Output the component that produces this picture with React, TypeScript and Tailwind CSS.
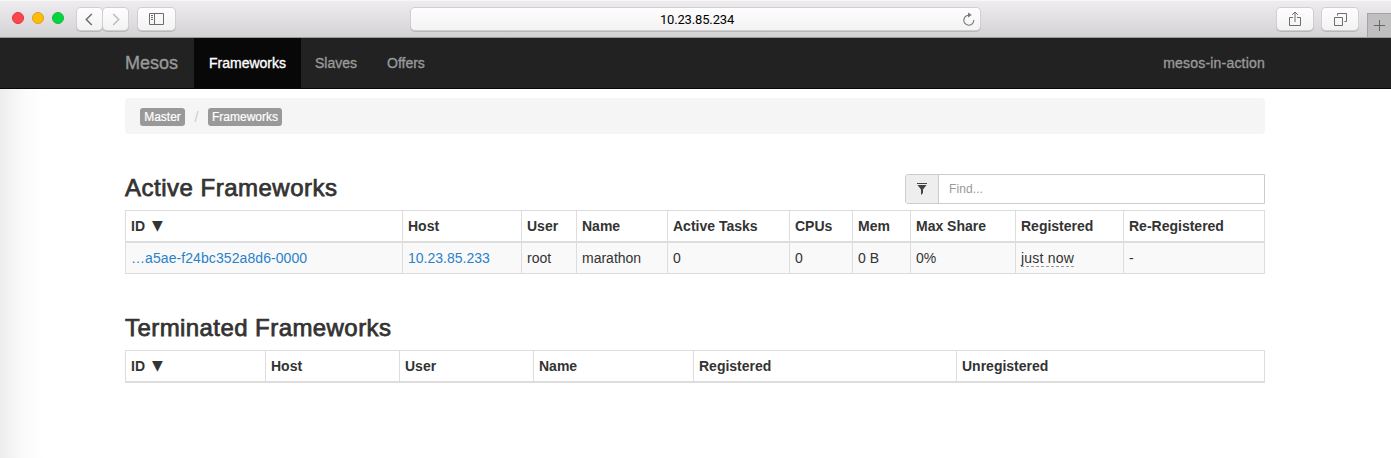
import React from "react";

type Column = { label: string; width: string };

const activeColumns: Column[] = [
  { label: "ID ▼", width: "w-[277px]" },
  { label: "Host", width: "w-[119px]" },
  { label: "User", width: "w-[55px]" },
  { label: "Name", width: "w-[91px]" },
  { label: "Active Tasks", width: "w-[122px]" },
  { label: "CPUs", width: "w-[63px]" },
  { label: "Mem", width: "w-[58px]" },
  { label: "Max Share", width: "w-[105px]" },
  { label: "Registered", width: "w-[108px]" },
  { label: "Re-Registered", width: "w-[142px]" },
];

const terminatedColumns: Column[] = [
  { label: "ID ▼", width: "w-[140px]" },
  { label: "Host", width: "w-[134px]" },
  { label: "User", width: "w-[134px]" },
  { label: "Name", width: "w-[160px]" },
  { label: "Registered", width: "w-[263px]" },
  { label: "Unregistered", width: "w-[309px]" },
];

const frameworks: React.ReactNode[][] = [
  [
    <a className="tracking-[0.08px] text-[#2a81cb]">…a5ae-f24bc352a8d6-0000</a>,
    <a className="text-[#2a81cb]">10.23.85.233</a>,
    "root",
    "marathon",
    "0",
    "0",
    "0 B",
    "0%",
    <span className="block h-[18px] w-[53px] border-b border-dashed border-[#999] leading-[18px] tracking-[0.2px]">
      just now
    </span>,
    "-",
  ],
];

function DataTable({ columns, rows = [] }: { columns: Column[]; rows?: React.ReactNode[][] }) {
  return (
    <table className="w-[1140px] table-fixed border-separate border-spacing-0 text-left text-sm leading-5">
      <thead>
        <tr>
          {columns.map((c) => (
            <th
              key={c.label}
              className={`${c.width} h-[33px] border-t border-b-2 border-l border-[#ddd] p-0 pl-[5px] font-bold whitespace-nowrap last:border-r`}
            >
              {c.label.endsWith("▼") ? (
                <span className="flex items-center gap-[7px]">
                  ID
                  <span className="w-[12px] pb-[2px] font-['DejaVu_Sans',sans-serif] text-[14px] leading-[18px] font-normal">
                    ▼
                  </span>
                </span>
              ) : (
                c.label
              )}
            </th>
          ))}
        </tr>
      </thead>
      <tbody>
        {rows.map((row, i) => (
          <tr key={i} className="bg-[#f9f9f9]">
            {row.map((cell, j) => (
              <td key={j} className="h-[31px] border-b border-l border-[#ddd] p-0 pl-[5px] whitespace-nowrap last:border-r">
                {cell}
              </td>
            ))}
          </tr>
        ))}
      </tbody>
    </table>
  );
}

const toolButton =
  "flex h-[22px] items-center justify-center rounded-[4px] bg-linear-to-b from-[#fefefe] to-[#f3f3f3] shadow-[0_0_0_1px_#d0ced0,0_1px_0_1px_#b9b7b9]";

function Toolbar() {
  return (
    <header className="flex h-[38px] items-start border-b border-[#9a999b] bg-linear-to-b from-[#efedef] to-[#d4d2d4] shadow-[inset_0_1px_0_#f8f7f8]">
      <div className="flex gap-2 pt-3 pl-3">
        <span className="size-3 rounded-full border border-[#e1343a] bg-[#fc4649]" />
        <span className="size-3 rounded-full border border-[#dfa01b] bg-[#fdbc05]" />
        <span className="size-3 rounded-full border border-[#12bb3a] bg-[#06d43f]" />
      </div>
      <div className="ml-[13px] flex gap-px pt-2">
        <span className={`${toolButton} w-[25px]`}>
          <svg className="-ml-px" width="8" height="13" viewBox="0 0 8 13" fill="none" stroke="#6d6d6d" strokeWidth="1.5">
            <path d="M6.8 1 1.3 6.5 6.8 12" />
          </svg>
        </span>
        <span className={`${toolButton} w-[25px]`}>
          <svg className="ml-px" width="8" height="13" viewBox="0 0 8 13" fill="none" stroke="#bcbcbc" strokeWidth="1.5">
            <path d="M1.2 1 6.7 6.5 1.2 12" />
          </svg>
        </span>
      </div>
      <div className="ml-[10px] pt-2">
        <span className={`${toolButton} w-[37px]`}>
          <svg width="15" height="12" viewBox="0 0 15 12" fill="none" stroke="#6d6d6d">
            <path d="M.5.5h14v11H.5zM5.5.5v11M2 2.5h2M2 4.5h2M2 6.5h2" />
          </svg>
        </span>
      </div>
      <div className="ml-[236px] pt-2">
        <div className={`${toolButton} w-[569px]`}>
          <span className="w-[21px]" />
          <span className="flex-1 pt-px text-center font-['Roboto',sans-serif] text-[13px] leading-5 tracking-[-0.15px] text-black">
            10.23.85.234
          </span>
          <svg className="mr-[4px]" width="14" height="15" viewBox="0 0 14 15" fill="none" stroke="#777" strokeWidth="1.1">
            <path d="M6.5 3.2A5 5 0 1 0 11.8 8" />
            <path d="M6 .5v5l3.8-2.5z" fill="#777" stroke="none" />
          </svg>
        </div>
      </div>
      <div className="ml-[297px] flex gap-[9px] pt-2">
        <span className={`${toolButton} w-[36px]`}>
          <svg width="12" height="16" viewBox="0 0 12 16" fill="none" stroke="#6d6d6d">
            <path d="M4 6.5H.5v8h11v-8H8M6 11V1M3.2 3.8 6 1l2.8 2.8" />
          </svg>
        </span>
        <span className={`${toolButton} w-[36px]`}>
          <svg width="13" height="13" viewBox="0 0 13 13" fill="none" stroke="#6d6d6d">
            <path d="M.5 4.5h8v8h-8zM3.5 2.5v-2h9v8h-2" />
          </svg>
        </span>
      </div>
      <span className="mt-[13px] ml-auto flex h-6 w-6 items-center justify-center border-t border-l border-[#a5a4a5] bg-[#c0bfc0]">
        <svg width="11" height="11" viewBox="0 0 11 11" stroke="#666">
          <path d="M5.5 0v11M0 5.5h11" />
        </svg>
      </span>
    </header>
  );
}

function Navbar() {
  return (
    <nav className="h-[51px] border-b border-[#080808] bg-[#222]">
      <div className="ml-[125px] flex h-[50px] w-[1140px] items-center text-sm leading-5 text-[#999] [-webkit-text-stroke:0.35px]">
        <span className="w-[69px] text-[18px]">Mesos</span>
        <span className="flex h-[50px] w-[107px] items-center justify-center bg-[#080808] text-white">Frameworks</span>
        <span className="w-[71px] pl-[14px]">Slaves</span>
        <span className="pl-[15px]">Offers</span>
        <span className="ml-auto tracking-[0.2px]">mesos-in-action</span>
      </div>
    </nav>
  );
}

export default function App() {
  return (
    <div className="h-[458px] w-[1391px] overflow-hidden bg-white font-['Liberation_Sans',Arial,sans-serif] text-[#333]">
      <Toolbar />
      <Navbar />
      <main className="h-[369px] bg-linear-to-r from-[#ededed] via-[#fbfbfb] via-[24px] to-white to-[45px] pt-[9px] pl-[125px]">
        <div className="flex h-9 w-[1140px] items-center rounded bg-[#f5f5f5] pt-[2px] pl-[15px] text-xs leading-[18px] text-white">
          <span className="w-[45px] rounded-[3px] bg-[#999] text-center [-webkit-text-stroke:0.2px]">Master</span>
          <span className="w-[23px] text-center text-sm leading-[18px] text-[#ccc]">/</span>
          <span className="w-[74px] rounded-[3px] bg-[#999] text-center [-webkit-text-stroke:0.2px]">Frameworks</span>
        </div>
        <div className="flex h-[76px] w-[1140px] items-end justify-between">
          <h2 className="pb-[6px] text-2xl leading-8 font-normal tracking-[0.5px] [-webkit-text-stroke:0.75px]">
            Active Frameworks
          </h2>
          <div className="mb-[6px] flex h-[30px] w-[360px] rounded-l-[3px] border border-[#ccc] bg-white text-xs">
            <span className="flex w-[33px] items-center justify-center rounded-l-[2px] border-r border-[#ccc] bg-[#eee]">
              <svg className="mb-px" width="10" height="12" viewBox="0 0 10 12" fill="#444">
                <path d="M0 0h10v1H0zM.5 2h9L6 6.5V10l-2 2V6.5z" />
              </svg>
            </span>
            <span className="flex items-center pl-[10px] tracking-[0.1px] text-[#999]">Find...</span>
          </div>
        </div>
        <DataTable columns={activeColumns} rows={frameworks} />
        <h2 className="mt-[38px] mb-[6px] text-2xl leading-8 font-normal tracking-[0.43px] [-webkit-text-stroke:0.75px]">
          Terminated Frameworks
        </h2>
        <DataTable columns={terminatedColumns} />
      </main>
    </div>
  );
}
